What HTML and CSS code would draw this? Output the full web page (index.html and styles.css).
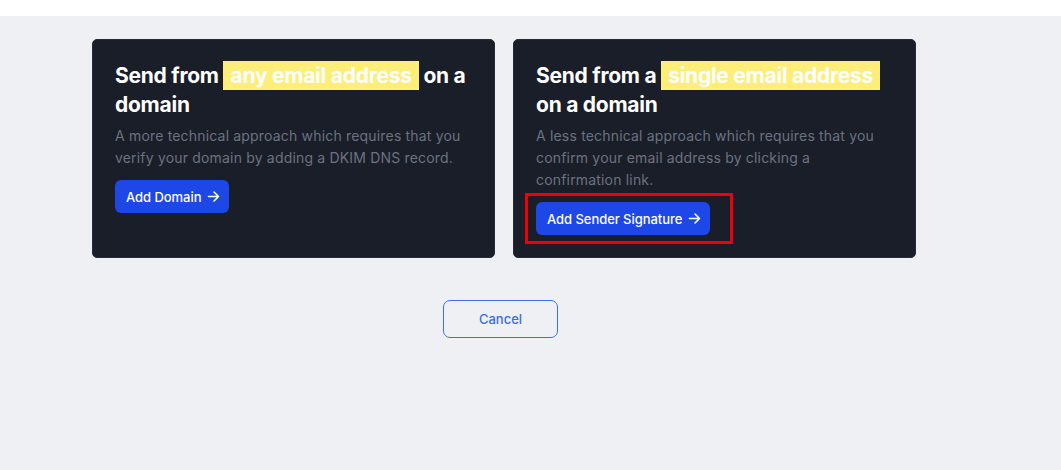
FILE: index.html
```html
<!DOCTYPE html>
<html lang="en">
<head>
<meta charset="utf-8">
<title>Choose sending method</title>
<link rel="stylesheet" href="styles.css">
</head>
<body>
<div class="topbar"></div>
<main class="page">
  <div class="cards">
    <section class="card">
      <h2 class="card-title">Send from <span class="mark">any email address</span> on a domain</h2>
      <p class="card-text">A more technical approach which requires that you verify your domain by adding a DKIM DNS record.</p>
      <div class="actions">
        <a class="btn" href="#">Add Domain
          <svg class="arrow" viewBox="0 0 13 13" width="13" height="13" aria-hidden="true"><path d="M1.5 6.5h10M7 2l4.5 4.5L7 11" fill="none" stroke="currentColor" stroke-width="1.6" stroke-linecap="round" stroke-linejoin="round"/></svg>
        </a>
      </div>
    </section>
    <section class="card">
      <h2 class="card-title">Send from a <span class="mark">single email address</span> on a domain</h2>
      <p class="card-text">A less technical approach which requires that you confirm your email address by clicking a confirmation link.</p>
      <div class="actions">
        <span class="annot-wrap">
          <a class="btn" href="#">Add Sender Signature
            <svg class="arrow" viewBox="0 0 13 13" width="13" height="13" aria-hidden="true"><path d="M1.5 6.5h10M7 2l4.5 4.5L7 11" fill="none" stroke="currentColor" stroke-width="1.6" stroke-linecap="round" stroke-linejoin="round"/></svg>
          </a>
          <span class="annot"></span>
        </span>
      </div>
    </section>
  </div>
  <div class="footer">
    <a class="btn-outline" href="#">Cancel</a>
  </div>
</main>
</body>
</html>
```

FILE: styles.css
```css
* { box-sizing: border-box; }
html, body { margin: 0; padding: 0; }
body {
  background: #eff0f4;
  font-family: Inter, "Noto Sans", "Liberation Sans", sans-serif;
  width: 1061px;
  height: 470px;
  overflow: hidden;
}
.topbar {
  height: 16px;
  background: #ffffff;
}
.page {
  padding: 23px 0 0 92px;
  width: 916px;
}
.cards {
  display: grid;
  grid-template-columns: 403px 403px;
  gap: 18px;
}
.card {
  background: #1a1e29;
  border: 1px solid #262b36;
  border-radius: 5px;
  padding: 21px 22px 22px;
  min-height: 218px;
}
.card-title {
  margin: 0;
  font-size: 21px;
  line-height: 29px;
  font-weight: 700;
  color: #ffffff;
  letter-spacing: -0.25px;
}
.mark {
  background: #fdee7a;
  color: #ffffff;
  padding: 2px 7px;
}
.card-text {
  margin: 6px 0 0;
  font-size: 14px;
  line-height: 22px;
  color: #6b7280;
  letter-spacing: 0.18px;
}
.actions {
  margin-top: 11px;
  display: flex;
}
.btn {
  display: inline-flex;
  align-items: center;
  gap: 6px;
  height: 33px;
  padding: 0 9px 0 11px;
  background: #1d47e6;
  color: #ffffff;
  border-radius: 6px;
  font-size: 13px;
  font-weight: 500;
  letter-spacing: -0.05px;
  text-decoration: none;
}
.arrow { display: block; }
.annot-wrap {
  position: relative;
  display: inline-flex;
}
.annot {
  position: absolute;
  top: -9px;
  bottom: -9px;
  left: -11px;
  right: -23px;
  border: 3px solid #ee0008;
  pointer-events: none;
}
.footer {
  margin-top: 42px;
  display: flex;
  justify-content: center;
  padding-right: 7px;
}
.btn-outline {
  display: inline-flex;
  align-items: center;
  justify-content: center;
  width: 115px;
  height: 38px;
  border: 1px solid #3b6ef0;
  border-radius: 7px;
  color: #3b6ee6;
  font-size: 13px;
  font-weight: 500;
  text-decoration: none;
}
```
